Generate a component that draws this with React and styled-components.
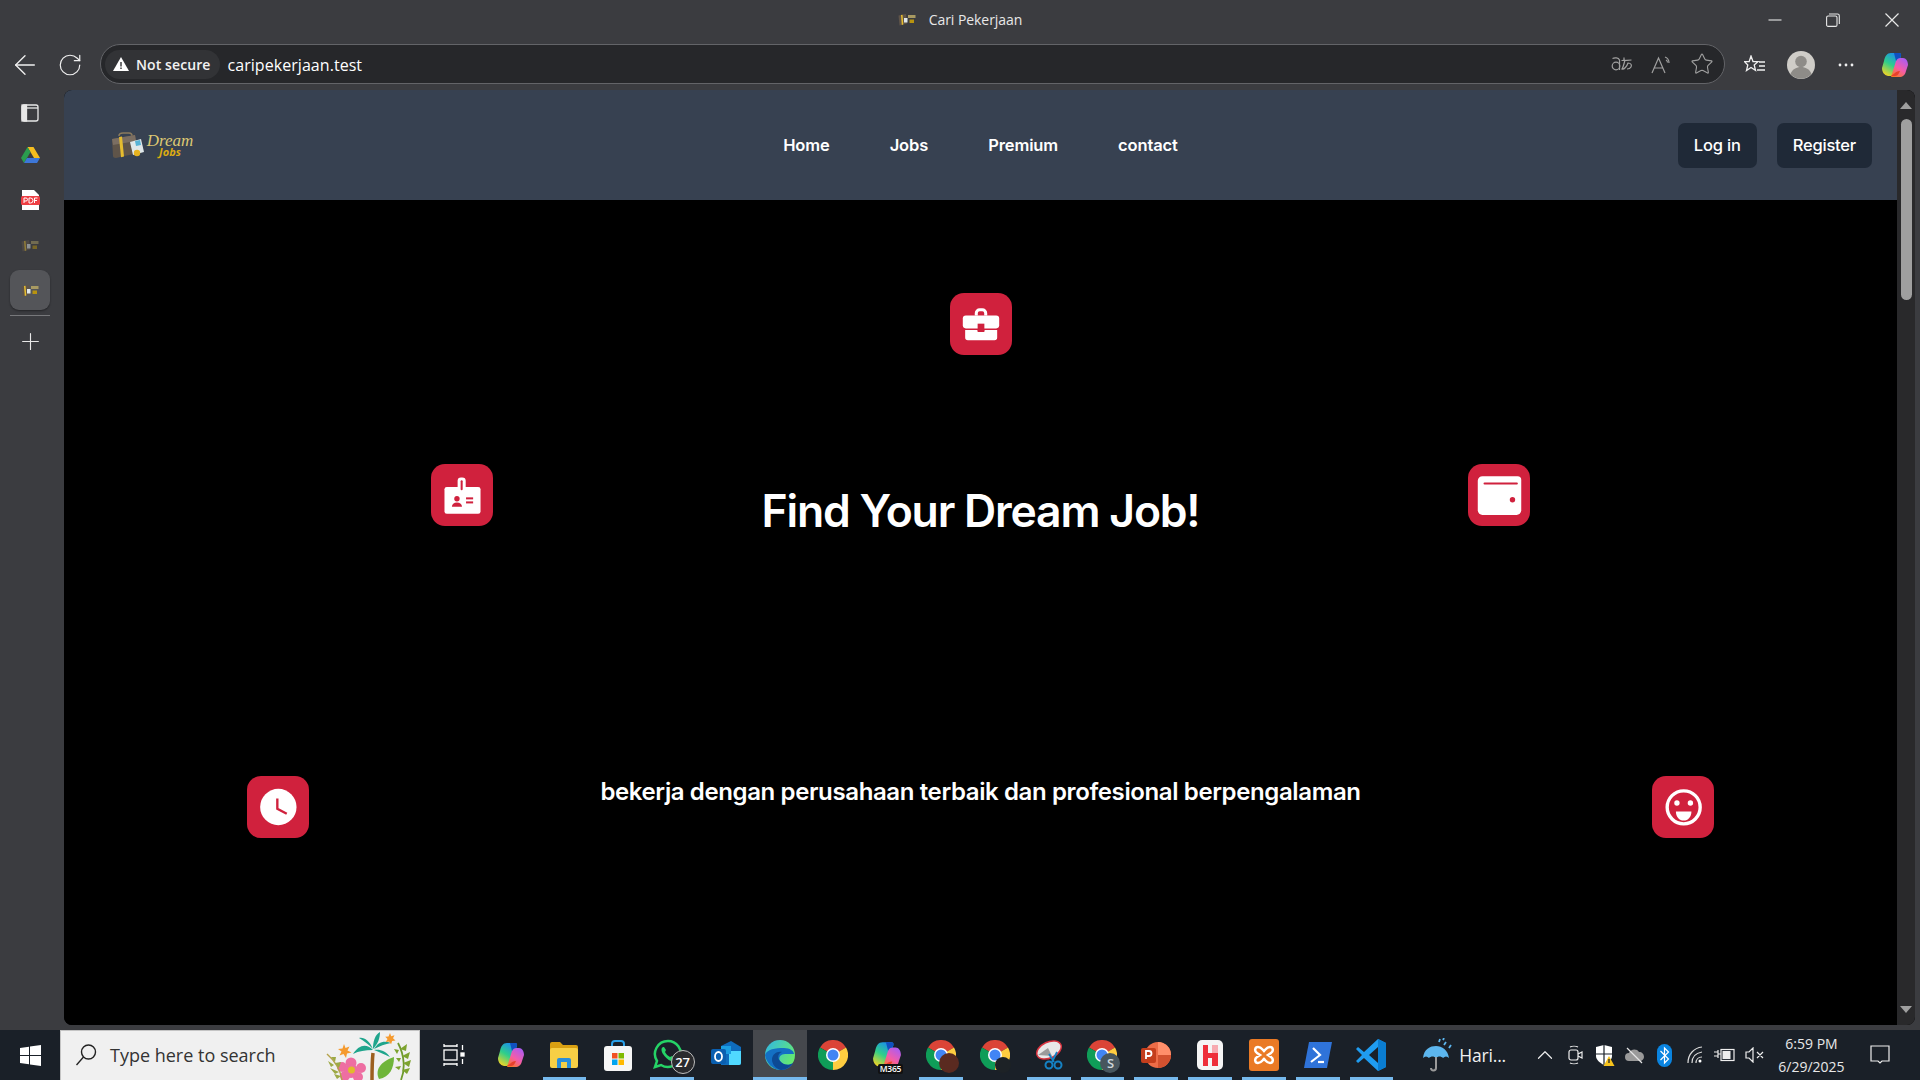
import React from "react";
import styled, { createGlobalStyle } from "styled-components";
import { ArrowLeft, RotateCw, Star, Plus, ChevronUp } from "lucide-react";

const Global = createGlobalStyle`
  html, body { margin: 0; padding: 0; background: #3b3c40; overflow: hidden; }
  * { box-sizing: border-box; }
  svg { flex: none; }
`;
const Screen = styled.div`
  width: 1920px; height: 1080px; display: flex; flex-direction: column; background: #3b3c40;
  font-family: "Open Sans", "Noto Sans", sans-serif; color: #fff;
`;
const TitleBar = styled.div`
  height: 44px; flex: none; display: grid; grid-template-columns: 1fr auto 1fr; align-items: start; padding-top: 10px;
`;
const TitleCenter = styled.div`
  grid-column: 2; display: flex; align-items: center; gap: 13px; font-size: 14px; line-height: 19px; letter-spacing: -0.05px; color: #e8e8e8;
`;
const WindowControls = styled.div`
  justify-self: end; display: flex; gap: 44px; padding-right: 20px; align-items: center; height: 19px;
`;
const Toolbar = styled.div`
  height: 46px; flex: none; display: flex; align-items: flex-start; padding-left: 9px; padding-right: 14px;
`;
const NavIcon = styled.span`
  display: flex; align-items: center; justify-content: center; width: ${p => p.$w || 22}px; height: 40px; margin-left: ${p => p.$ml || 0}px; flex: none; margin-top: 1px;
`;
const AddressBar = styled.div`
  width: 1625px; height: 40px; margin-left: 17px; flex: none; display: flex; align-items: center; background: #26272a; border: 1.5px solid #636468; border-radius: 20px; padding: 0 10px 0 4px;
`;
const SecurePill = styled.div`
  display: flex; align-items: center; gap: 7px; height: 29px; padding: 0 9px 0 8px; background: #323336; border-radius: 15px; font-size: 14px; font-weight: 600; letter-spacing: 0.1px; color: #f2f2f2;
`;
const UrlText = styled.span`
  margin-left: 8px; font-size: 16px; line-height: 22px; padding-top: 1px; letter-spacing: 0.05px; color: #fff;
`;
const AddressTools = styled.div`
  margin-left: auto; display: flex; align-items: center; gap: 18px;
`;
const Main = styled.div`
  flex: 1; min-height: 0; display: flex; padding: 0 5px 5px 0;
`;
const Sidebar = styled.aside`
  width: 64px; flex: none; display: flex; flex-direction: column; align-items: center; padding-top: 2px; padding-right: 4px;
`;
const SideIcon = styled.div`
  width: 40px; height: ${p => p.$h || 42}px; display: flex; align-items: center; justify-content: center; flex: none;
  ${p => p.$active && `background: #545559; border-radius: 9px; height: 40px; margin-top: 4px; box-shadow: 0 1px 2px #0006;`}
`;
const SideRule = styled.div`
  width: 40px; height: 1px; background: #77787b; margin: 5px 0 9px; flex: none;
`;
const BrowserPage = styled.div`
  flex: 1; min-width: 0; display: flex; border-radius: 8px; overflow: hidden; background: #000;
`;
const Page = styled.main`
  flex: 1; min-width: 0; display: flex; flex-direction: column;
`;
const ScrollTrack = styled.div`
  width: 18px; flex: none; background: #29292b; display: flex; flex-direction: column; align-items: center; padding-top: 12px;
`;
const ScrollThumb = styled.div`
  width: 11px; height: 181px; margin-top: 10px; background: #9f9f9f; border-radius: 6px;
`;
const ScrollArrow = styled.div`
  width: 0; height: 0; border-left: 6.5px solid transparent; border-right: 6.5px solid transparent;
  ${p => p.$down ? `border-top: 7px solid #9f9f9f; margin-top: auto; margin-bottom: 12px;` : `border-bottom: 7px solid #9f9f9f;`}
`;
const NavBar = styled.header`
  height: 110px; flex: none; background: #374151; display: grid; grid-template-columns: 1fr auto 1fr; align-items: center; padding: 0 25px;
`;
const Brand = styled.div`
  display: flex; align-items: center; gap: 2px; margin-left: 21px;
`;
const BrandText = styled.div`
  display: flex; flex-direction: column; align-items: center; width: 48px; margin-top: 0px;
`;
const BrandDream = styled.span`
  font: italic 400 17px/13px "Liberation Serif", serif; color: #dcc873;
`;
const BrandJobs = styled.span`
  font: italic 700 11px/10px "Open Sans", sans-serif; color: #dcab12;
`;
const NavLinks = styled.nav`
  display: flex; gap: 60px;
`;
const NavLink = styled.a`
  font: 600 16.5px/24px Inter, sans-serif; letter-spacing: -0.12px; color: #fff;
`;
const AuthButtons = styled.div`
  justify-self: end; display: flex; gap: 20px;
`;
const AuthButton = styled.button`
  height: 45px; padding: 0 16px; border: 0; border-radius: 7px; background: #1f2937; color: #fff; font: 500 16.5px/24px Inter, sans-serif; letter-spacing: -0.2px;
`;
const Hero = styled.section`
  flex: 1; display: flex; flex-direction: column; background: #000;
`;
const HeroTop = styled.div`
  display: flex; justify-content: center; padding-top: 93px;
`;
const HeroRow = styled.div`
  display: flex; justify-content: space-between; align-items: flex-start;
  margin-top: ${p => p.$mt}px; padding: 0 ${p => p.$inset}%;
`;
const Tile = styled.div`
  width: 62px; height: 62px; flex: none; border-radius: 14px; background: #d0213d; display: flex;
`;
const Heading = styled.h1`
  margin: 20px 0 0; font: 600 44.5px/54px Inter, sans-serif; letter-spacing: -1.2px; color: #fff; white-space: nowrap;
`;
const SubHeading = styled.p`
  margin: 0; font: 600 24px/29px Inter, sans-serif; letter-spacing: -0.38px; color: #fff; white-space: nowrap; margin-top: 1px;
`;
const Taskbar = styled.footer`
  height: 50px; flex: none; display: flex; align-items: stretch; background: #1a2028;
`;
const StartButton = styled.div`
  width: 60px; flex: none; display: flex; align-items: center; justify-content: center;
`;
const SearchBox = styled.div`
  width: 360px; flex: none; position: relative; display: flex; align-items: center; gap: 13px; padding: 0 0 2px 14px; background: #f0f0f0; border-top: 1px solid #c4c4c4; border-left: 1px solid #c4c4c4; border-right: 1px solid #c4c4c4; color: #333; font-size: 18px;
  overflow: hidden;
`;
const SearchArt = styled.span`
  position: absolute; right: 3px; bottom: 0; display: flex;
`;
const TaskList = styled.div`
  display: flex; margin-left: 5px; flex: none;
`;
const TaskSlot = styled.div`
  width: ${p => p.$w || 53.8}px; flex: none; position: relative; display: flex; align-items: center; justify-content: center;
  ${p => p.$active && `background: #45484d;`}
  &::after { content: ""; display: ${p => p.$run ? "block" : "none"}; position: absolute; bottom: 0; height: 3px; left: ${p => p.$active ? 0 : 5}px; right: ${p => p.$active ? 0 : 5}px; background: #76b9ed; }
`;
const Weather = styled.div`
  margin-left: 24px; display: flex; align-items: center; gap: 7px; font-size: 17.5px; letter-spacing: -0.2px; color: #f0f0f0; width: 98px; flex: none;
`;
const Tray = styled.div`
  display: flex; align-items: center; flex: none; margin-left: 10px;
`;
const TrayIcon = styled.span`
  width: 29.9px; display: flex; align-items: center; justify-content: center; flex: none;
`;
const Clock = styled.div`
  width: 84px; flex: none; display: flex; flex-direction: column; align-items: center; justify-content: center; font-size: 14px; line-height: 23px; color: #e8e8e8;
`;
const Notice = styled.span`
  width: 54px; display: flex; align-items: center; justify-content: center; flex: none;
`;

/* ---------- hero drawings ---------- */
const TileArt = ({ children }) => <svg width="62" height="62" viewBox="0 0 184 184">{children}</svg>;
const RED = "#d0213d";
const Briefcase = () => (
  <TileArt>
    <path d="M78 67V60a10 10 0 0 1 10-10h8a10 10 0 0 1 10 10v7" fill="none" stroke="#fff" strokeWidth="9" />
    <rect x="38" y="67" width="108" height="38" rx="9" fill="#fff" />
    <path d="M45 110h37v6h20v-6h38v22a8 8 0 0 1-8 8H53a8 8 0 0 1-8-8z" fill="#fff" />
    <rect x="82" y="91" width="20" height="22" fill={RED} />
  </TileArt>
);
const IdBadge = () => (
  <TileArt>
    <rect x="40" y="68" width="107" height="80" rx="7" fill="#fff" />
    <rect x="79" y="40" width="24" height="46" rx="10" fill="#fff" />
    <rect x="88" y="48" width="6" height="30" rx="3" fill={RED} />
    <circle cx="77" cy="103" r="8" fill={RED} />
    <path d="M62 127c0-8 6-13 15-13s15 5 15 13z" fill={RED} />
    <rect x="104" y="99" width="21" height="6" fill={RED} />
    <rect x="104" y="111" width="21" height="6" fill={RED} />
  </TileArt>
);
const Wallet = () => (
  <TileArt>
    <path d="M29 50a14 14 0 0 1 14-14h104a11 11 0 0 1 11 11v90a14 14 0 0 1-14 14H43a14 14 0 0 1-14-14z" fill="#fff" />
    <rect x="46" y="55" width="102" height="6" rx="3" fill={RED} />
    <circle cx="132" cy="106" r="8" fill={RED} />
  </TileArt>
);
const ClockArt = () => (
  <TileArt>
    <circle cx="93" cy="92" r="54" fill="#fff" />
    <path d="M90 67v30l28 15" fill="none" stroke={RED} strokeWidth="7" />
  </TileArt>
);
const Smile = () => (
  <TileArt>
    <circle cx="94" cy="93" r="49" fill="none" stroke="#fff" strokeWidth="10" />
    <circle cx="74" cy="80" r="8" fill="#fff" />
    <circle cx="114" cy="80" r="8" fill="#fff" />
    <path d="M71 105h46c0 16-10 27-23 27s-23-11-23-27z" fill="#fff" />
  </TileArt>
);

/* ---------- small drawings ---------- */
const Favicon = ({ dim }) => (
  <svg width="18" height="13" viewBox="0 0 18 13" opacity={dim ? 0.5 : 1}>
    <path d="M0.500 2.500l7.500-1.500 1 9.500-7.500 2z" fill="#5f5449" />
    <path d="M3 2l1.500-.3 .8 9.800-1.500.4z" fill="#e6bd2f" />
    <rect x="6" y="5" width="3.500" height="4.500" fill="#dfe7ea" />
    <rect x="10" y="2" width="7.500" height="3" fill="#a89a62" />
    <rect x="11.500" y="6.500" width="4.500" height="3.500" fill="#b8930f" />
  </svg>
);
const LogoCase = () => (
  <svg width="34" height="28" viewBox="0 0 34 28">
    <path d="M9 5c0-2 2-3 4-3h6c2 0 3 1 3 3" fill="none" stroke="#8a7a5e" strokeWidth="1.5" />
    <path d="M2 8l23-4 3 18-22 5c-2 0-3-1-3-2z" fill="#5f5449" />
    <path d="M2 8l23-4 1 6-23 4z" fill="#7b6e62" />
    <path d="M9 6l3-.6 2 20-3 .8z" fill="#e6bd2f" />
    <path d="M20 11l11-3 3 13-11 3z" fill="#dfe7ea" />
    <path d="M25 10l5-1 1 5-5 1z" fill="#57b3d6" />
    <circle cx="27" cy="22" r="3.2" fill="#e6b320" />
  </svg>
);
const Windows = () => (
  <svg width="21" height="21" viewBox="0 0 21 21" fill="#fff">
    <path d="M0 3l9-1.300V10H0zM10 1.500L21 0v10H10zM0 11h9v8.300L0 18zM10 11h11v10l-11-1.500z" />
  </svg>
);
const Magnifier = () => (
  <svg width="22" height="24" viewBox="0 0 22 24" fill="none" stroke="#222" strokeWidth="1.4">
    <circle cx="13.500" cy="9" r="7" />
    <path d="M8.500 14L1.500 22" />
  </svg>
);
const Tropical = () => (
  <svg width="90" height="50" viewBox="0 0 90 50">
    <path d="M46 50c0-10 0-18 1-27" stroke="#9c5f1f" strokeWidth="3.500" fill="none" />
    <path d="M47 20C40 13 33 15 27 24c6-3 12-4 20-4zM47 19C43 10 38 7 33 8c5 3 9 6 14 11zM47 19c0-8 2-14 7-17 0 6-2 12-7 17zM48 19c4-7 10-9 17-6-6 1-11 3-17 6zM48 20c6-1 12 1 16 7-6-3-11-5-16-7z" fill="#1fa58c" />
    <g fill="#ee6ea2">
      <circle cx="25" cy="33" r="5.500" /><circle cx="35" cy="38" r="5" /><circle cx="32" cy="47" r="5" /><circle cx="19" cy="46" r="5" /><circle cx="16" cy="37" r="5" />
      <circle cx="25" cy="41" r="7" />
    </g>
    <circle cx="25.500" cy="40" r="3.500" fill="#e2b92c" />
    <g fill="#f59a2e">
      <path d="M18 14l1.500 4 4-1.500-2 4 4 2-4.500 1-1 4.500-2.500-4-4 1.500 2-4-3.500-2.500 4.500-.5z" />
      <path d="M64 3l1.200 3.300 3.300-1-1.500 3 2.500 2.200-3.400.4-1 3.300-2-2.800-3.300.6 1.700-3-2.300-2.300 3.300-.3z" />
    </g>
    <path d="M53 49c-4-8 0-17 15-22 0 11-4 20-15 22z" fill="#6fb53a" />
    <path d="M75 50c4-10 4-24-3-37" stroke="#6e9a2c" strokeWidth="1.800" fill="none" />
    <path d="M74 19l7-5-1 7zM76 26l8-4-2 7zM77 33l8-3-2 7zM76 40l8-2-3 6zM73 20l-5-1 3 5zM75 28l-5 0 3 4zM75 36l-6 1 4 3z" fill="#7da32f" />
    <path d="M1 24c7 6 13 14 15 26" stroke="#b5a24a" strokeWidth="1.500" fill="none" />
    <path d="M5 27l5 0-1 5zM9 33l6-1-2 6zM2 31l6 4-3 2zM4 38l9 4-4 2zM8 44l7 2-4 3z" fill="#9ca945" />
  </svg>
);
const TaskViewIcon = () => (
  <svg width="22" height="24" viewBox="0 0 22 24" fill="none" stroke="#fff" strokeWidth="1.3">
    <rect x="1" y="7" width="13" height="10" />
    <path d="M1 3h13M1 21h13M14 1v3M1 1v3M1 20v3M14 20v3" />
    <rect x="18" y="10" width="3" height="3" fill="#fff" />
    <path d="M19.500 2v5M19.500 16v5" />
  </svg>
);
const CopilotIcon = ({ id, size = 28 }) => (
  <svg width={size} height={size} viewBox="0 0 28 28">
    <defs>
      <linearGradient id={id + "a"} x1="0.700" y1="0" x2="0.200" y2="1">
        <stop offset="0" stopColor="#1a8cf0" /><stop offset=".5" stopColor="#2fcf8a" /><stop offset="1" stopColor="#fbd420" />
      </linearGradient>
      <linearGradient id={id + "b"} x1="0.800" y1="0" x2="0.200" y2="1">
        <stop offset="0" stopColor="#a85cf5" /><stop offset=".55" stopColor="#f45ca8" /><stop offset="1" stopColor="#f97a24" />
      </linearGradient>
    </defs>
    <path d="M10 2h8c2 0 2 1 2 3l-6 17c-1 2-2 3-4 3H7c-4-1-6-4-6-8l2-7c1-5 3-8 7-8z" fill={`url(#${id}a)`} />
    <path d="M18 26h-7c-1 0-1-.5-.5-1.500L15 10c1-2 2-3 4-3h3c3 0 5 3 5 7l-2 6c-1 4-3 6-7 6z" fill={`url(#${id}b)`} />
    <path d="M13 2h5c2 0 2.500 1 2 3l-1 2c-2 0-3 1-4 3z" fill="#1050c0" />
    <path d="M10 25h4c2 0 3-1 4-3l1-2c-3 0-4 1-5 2z" fill="#e8402c" />
  </svg>
);
const Explorer = () => (
  <svg width="28" height="26" viewBox="0 0 28 26">
    <path d="M0 2a2 2 0 0 1 2-2h8l3 3h13a2 2 0 0 1 2 2v4H0z" fill="#d9a012" />
    <rect y="6" width="28" height="20" rx="2" fill="#f7cf45" />
    <path d="M7 26V18a2 2 0 0 1 2-2h10a2 2 0 0 1 2 2v8h-4v-6h-6v6z" fill="#2b8ed8" />
  </svg>
);
const StoreIcon = () => (
  <svg width="28" height="31" viewBox="0 0 28 31">
    <path d="M8 8V4a3 3 0 0 1 3-3h6a3 3 0 0 1 3 3v4" fill="none" stroke="#2aa0e8" strokeWidth="2" />
    <rect y="6" width="28" height="25" rx="3" fill="#f6f6f6" />
    <rect x="8" y="13" width="5.500" height="5.500" fill="#f25022" />
    <rect x="14.500" y="13" width="5.500" height="5.500" fill="#7fba00" />
    <rect x="8" y="19.500" width="5.500" height="5.500" fill="#00a4ef" />
    <rect x="14.500" y="19.500" width="5.500" height="5.500" fill="#ffb900" />
  </svg>
);
const BadgeWrap = styled.span`position: relative; display: flex; margin-top: -2px; margin-left: -9px;`;
const CountBadge = styled.span`
  position: absolute; right: -12px; bottom: -5px; width: 24px; height: 24px; border-radius: 50%; background: #2a2b2e; border: 1px solid #bdbdbd; display: flex; align-items: center; justify-content: center; font-size: 13px; font-weight: 600; color: #fff;
`;
const WhatsApp = () => (
  <BadgeWrap>
    <svg width="30" height="30" viewBox="0 0 30 30">
      <path d="M15 2a13 13 0 0 0-11 20l-2 6 6-2A13 13 0 1 0 15 2z" fill="none" stroke="#25d366" strokeWidth="2.5" />
      <path d="M10 8c-2 1-2 4 0 7s5 6 8 7c3 0 4-2 4-3l-3-2-2 1c-2-1-4-3-5-5l1-2-2-3z" fill="#25d366" />
    </svg>
    <CountBadge>27</CountBadge>
  </BadgeWrap>
);
const Outlook = () => (
  <svg width="30" height="28" viewBox="0 0 30 28">
    <path d="M10 5l10-5 10 6v16a2 2 0 0 1-2 2H10z" fill="#0f6cbd" />
    <path d="M18 10h12v12a2 2 0 0 1-2 2H18z" fill="#50d9ff" />
    <path d="M10 5h10v8H10z" fill="#1b9de2" />
    <rect y="8" width="15" height="15" rx="2" fill="#0a5fb0" />
    <ellipse cx="7.500" cy="15.500" rx="3.500" ry="4.500" fill="none" stroke="#fff" strokeWidth="1.800" />
  </svg>
);
const Edge = () => (
  <svg width="30" height="30" viewBox="0 0 30 30">
    <defs>
      <linearGradient id="edgeA" x1="0" y1="0" x2="1" y2="0.600"><stop offset="0" stopColor="#2fb5e8" /><stop offset="1" stopColor="#66eb6e" /></linearGradient>
    </defs>
    <circle cx="15" cy="15" r="15" fill="url(#edgeA)" />
    <path d="M0 15C1 22 7 30 16 30c6 0 10-3 12-7-4 3-11 2-13-2-2-4 1-7 5-7h9c0-3-4-6-10-6C10 8 2 9 0 15z" fill="#1470c4" />
    <path d="M15 21c-3-3-2-8 2-9-5-1-10 2-10 8 0 4 4 9 9 10 5 0 9-3 12-7-4 3-10 2-13-2z" fill="#0d4a94" />
  </svg>
);
const Chrome = () => (
  <svg width="30" height="30" viewBox="0 0 30 30">
    <path d="M15 15L2 7.500A15 15 0 0 1 28 7.500z" fill="#db4437" />
    <path d="M15 15L2 7.500A15 15 0 0 0 15 30z" fill="#0f9d58" />
    <path d="M15 15L28 7.500A15 15 0 0 1 15 30z" fill="#ffcd40" />
    <circle cx="15" cy="15" r="7" fill="#fff" />
    <circle cx="15" cy="15" r="5.500" fill="#4285f4" />
  </svg>
);
const ChromeWrap = styled.span`position: relative; display: flex;`;
const ProfileDot = styled.span`
  position: absolute; right: ${p => p.$r ?? -3}px; bottom: -3px; width: ${p => p.$s || 20}px; height: ${p => p.$s || 20}px; border-radius: 50%; background: ${p => p.$bg}; display: flex; align-items: center; justify-content: center; font-size: 13px; font-weight: 600; color: #cfd8dc;
`;
const M365Tag = styled.span`
  position: absolute; right: -1px; bottom: -4px; background: #111; color: #fff; font-size: 8.5px; line-height: 10px; padding: 0 2px; border-radius: 2px; font-weight: 600; letter-spacing: -0.2px;
`;
const M365 = () => (
  <ChromeWrap>
    <CopilotIcon id="m365" size={30} />
    <M365Tag>M365</M365Tag>
  </ChromeWrap>
);
const Snip = () => (
  <svg width="28" height="30" viewBox="0 0 28 30">
    <ellipse cx="14" cy="10" rx="13" ry="8" fill="#e8e8e8" stroke="#d9333f" strokeWidth="1.500" transform="rotate(-25 14 10)" />
    <path d="M3 15l10-7 4 8z" fill="#9b9b9b" />
    <path d="M14 14l5 8M22 12l-5 10" stroke="#1582c4" strokeWidth="1.800" fill="none" />
    <circle cx="14" cy="25" r="3.500" fill="none" stroke="#1582c4" strokeWidth="2" />
    <circle cx="23" cy="25" r="3.500" fill="none" stroke="#1582c4" strokeWidth="2" />
  </svg>
);
const PowerPoint = () => (
  <svg width="30" height="30" viewBox="0 0 30 30">
    <circle cx="17" cy="15" r="13" fill="#ed6c47" />
    <path d="M17 2a13 13 0 0 1 13 13H17z" fill="#ff8f6b" />
    <path d="M17 15h13a13 13 0 0 1-13 13z" fill="#d35230" />
    <rect y="8" width="15" height="15" rx="2" fill="#c43e1c" />
    <path d="M5 19v-8h3a2.500 2.500 0 0 1 0 5H5" fill="none" stroke="#fff" strokeWidth="1.800" />
  </svg>
);
const HApp = () => (
  <svg width="26" height="30" viewBox="0 0 26 30">
    <rect width="26" height="30" rx="5" fill="#f5f5f5" />
    <path d="M6 5h5v8h4V5h6v21h-6v-8h-4v8H6z" fill="#ee2f3a" />
    <path d="M15 5h6v8h-6z" fill="#f7aab0" />
  </svg>
);
const Xampp = () => (
  <svg width="30" height="32" viewBox="0 0 30 32">
    <rect width="30" height="32" rx="3" fill="#ea7a25" />
    <path d="M9 8c3 0 4 2 6 4 2-2 3-4 6-4s4 4 1 6l-3 2 3 2c3 2 2 6-1 6s-4-2-6-4c-2 2-3 4-6 4s-4-4-1-6l3-2-3-2c-3-2-2-6 1-6z" fill="none" stroke="#fff" strokeWidth="2.500" />
  </svg>
);
const Terminal = () => (
  <svg width="30" height="26" viewBox="0 0 30 26">
    <path d="M6 0h23l-5 26H1z" fill="#2f73d9" />
    <path d="M10 6l7 7-9 7" fill="none" stroke="#fff" strokeWidth="2.200" />
    <path d="M15 20h6" stroke="#fff" strokeWidth="2.200" />
  </svg>
);
const VSCode = () => (
  <svg width="30" height="34" viewBox="0 0 30 34">
    <path d="M22 1l8 4v24l-8 4L8 20l-6 5-2-2 6-6-6-6 2-2 6 5z" fill="#1f9cf0" />
    <path d="M22 1l8 4v24l-8 4z" fill="#0a7dd1" />
    <path d="M22 9v16l-9-8z" fill="#1a2028" />
  </svg>
);
const Umbrella = () => (
  <svg width="30" height="34" viewBox="0 0 30 34">
    <path d="M1 20C2 11 8 8 14 8s12 4 13 12c-2-2-4-2-6 0-2-2-5-2-7 0-2-2-5-2-7 0-2-2-4-2-6 0z" fill="#5cb6ee" />
    <path d="M14 19v11a2.500 2.500 0 0 1-5 0" fill="none" stroke="#9a9a9a" strokeWidth="2" />
    <path d="M17 4l1-3M22 7l2-3M27 10l2-3M21 2l1-2" stroke="#5cb6ee" strokeWidth="1.800" />
  </svg>
);
const Tools = {
  meet: <svg width="15" height="22" viewBox="0 0 15 22" fill="none" stroke="#eee" strokeWidth="1.200"><rect x="1" y="6" width="9" height="10" rx="2" /><path d="M10 10l4-2v6l-4-2M2 3c2-1 6-1 8 0M2 19c2 1 6 1 8 0" /></svg>,
  shield: <svg width="20" height="23" viewBox="0 0 20 23"><path d="M9 1l8 2v9c0 4-4 7-8 9-4-2-8-5-8-9V3z" fill="#fff" /><path d="M9 1v20M1 10h16" stroke="#1a2028" strokeWidth="1.200" /><path d="M14 12l5.500 10h-11z" fill="#f6c21c" /><path d="M14 15v4" stroke="#222" strokeWidth="1.300" /></svg>,
  cloud: <svg width="21" height="18" viewBox="0 0 21 18"><path d="M5 15a4 4 0 0 1 0-8c1-4 8-5 10-1 3 0 5 2 5 5 0 2-2 4-4 4z" fill="#9a9a9a" /><path d="M3 2l15 15" stroke="#e6e6e6" strokeWidth="1.300" /></svg>,
  bluetooth: <svg width="15" height="23" viewBox="0 0 15 23"><rect width="15" height="23" rx="7.500" fill="#0a84e0" /><path d="M3.500 7l8 8-4 4V4l4 4-8 8" fill="none" stroke="#fff" strokeWidth="1.200" /></svg>,
  wifi: <svg width="16" height="18" viewBox="0 0 16 18" fill="none" stroke="#ddd" strokeWidth="1.200"><path d="M1 17C1 8 7 2 15 1M5 17c0-6 4-10 10-11M9 17c0-3 2-6 6-6" /><circle cx="13" cy="15" r="1.500" fill="#fff" stroke="none" /></svg>,
  battery: <svg width="21" height="14" viewBox="0 0 21 14"><path d="M0 4h4M0 8h4M4 2v8M4 6h3" stroke="#eee" strokeWidth="1.200" fill="none" /><rect x="7" y="1.500" width="13" height="11" fill="none" stroke="#eee" strokeWidth="1.200" /><rect x="8.500" y="3" width="8" height="8" fill="#eee" /></svg>,
  sound: <svg width="20" height="16" viewBox="0 0 20 16" fill="none" stroke="#eee" strokeWidth="1.200"><path d="M1 5h3l4-4v14l-4-4H1zM12 5l6 6M18 5l-6 6" /></svg>,
};

const tasks = [
  { icon: <CopilotIcon id="tb" /> },
  { icon: <Explorer />, run: true },
  { icon: <StoreIcon /> },
  { icon: <WhatsApp />, run: true },
  { icon: <Outlook /> },
  { icon: <Edge />, run: true, active: true },
  { icon: <Chrome /> },
  { icon: <M365 /> },
  { icon: <ChromeWrap><Chrome /><ProfileDot $bg="#5a2a20" /></ChromeWrap>, run: true },
  { icon: <ChromeWrap><Chrome /><ProfileDot $bg="#1d2226" $s={16} $r={-1} /></ChromeWrap> },
  { icon: <Snip />, run: true },
  { icon: <ChromeWrap><Chrome /><ProfileDot $bg="#48565e">S</ProfileDot></ChromeWrap>, run: true },
  { icon: <PowerPoint />, run: true },
  { icon: <HApp />, run: true },
  { icon: <Xampp />, run: true },
  { icon: <Terminal />, run: true },
  { icon: <VSCode />, run: true },
];

export default function App() {
  return (
    <Screen>
      <Global />
      <TitleBar>
        <TitleCenter><Favicon />Cari Pekerjaan</TitleCenter>
        <WindowControls>
          <svg width="14" height="14" viewBox="0 0 14 14" stroke="#e8e8e8" strokeWidth="1.100"><path d="M0.500 7h13" /></svg>
          <svg width="14" height="14" viewBox="0 0 14 14" fill="none" stroke="#e8e8e8" strokeWidth="1.100"><rect x="0.600" y="3" width="10.400" height="10.400" rx="1.500" /><path d="M3 1h8.500A1.800 1.800 0 0 1 13.300 2.800V11" /></svg>
          <svg width="16" height="16" viewBox="0 0 16 16" stroke="#e8e8e8" strokeWidth="1.200"><path d="M1.500 1.500l13 13M14.500 1.500l-13 13" /></svg>
        </WindowControls>
      </TitleBar>
      <Toolbar>
        <NavIcon $w={32}><ArrowLeft size={32} color="#f0f0f0" strokeWidth={1} /></NavIcon>
        <NavIcon $w={26} $ml={16}><RotateCw size={26} color="#f0f0f0" strokeWidth={1.100} /></NavIcon>
        <AddressBar>
          <SecurePill>
            <svg width="16" height="14" viewBox="0 0 16 14"><path d="M8 0l8 14H0z" fill="#fff" /><path d="M8 5v4.500M8 10.500v1.500" stroke="#323336" strokeWidth="1.400" /></svg>
            Not secure
          </SecurePill>
          <UrlText>caripekerjaan.test</UrlText>
          <AddressTools>
            <svg width="22" height="16" viewBox="0 0 22 16" fill="none" stroke="#a0a0a0" strokeWidth="1.200"><circle cx="5" cy="10" r="3.800" /><path d="M1.500 2.500c2-1 6-1 7 1.500v10M13 1.500v3M10.500 4.500c3 0 6 0 10-.5M14 4c-1 4-2 8-3 9 2 1 5-3 6-6 3 0 4 2 3 4-1 2-3 2-4 2" /></svg>
            <svg width="21" height="19" viewBox="0 0 21 19" fill="none" stroke="#a0a0a0" strokeWidth="1.200"><path d="M1 18L7.500 3 14 18M3.500 13h8M14 2c3 1 4 3 4 6M15 5c1 .5 1.500 1 1.500 2.500" /></svg>
            <Star size={24} color="#a0a0a0" strokeWidth={1.100} />
          </AddressTools>
        </AddressBar>
        <NavIcon $w={22} $ml={19}>
          <svg width="22" height="20" viewBox="0 0 22 20" fill="none" stroke="#f0f0f0" strokeWidth="1.300"><path d="M7 1l2 5.500 5 .2-3.800 3.300 1.300 5.300L7 12.500 2.500 15.500 3.800 10 0.500 6.700l4.700-.2zM15 7h6M15 11h6M13 15h8" /></svg>
        </NavIcon>
        <NavIcon $w={30} $ml={20}>
          <svg width="28" height="28" viewBox="0 0 28 28"><circle cx="14" cy="14" r="14" fill="#cfcdc8" /><circle cx="14" cy="10.500" r="5.800" fill="#8e8c88" /><path d="M3.500 23c2-5 6-7 10.500-7s8.500 2 10.500 7a14 14 0 0 1-21 0z" fill="#8e8c88" /></svg>
        </NavIcon>
        <NavIcon $w={20} $ml={20}>
          <svg width="16" height="4" viewBox="0 0 16 4" fill="#f0f0f0"><circle cx="2" cy="2" r="1.400" /><circle cx="8" cy="2" r="1.400" /><circle cx="14" cy="2" r="1.400" /></svg>
        </NavIcon>
        <NavIcon $w={28} $ml={25}><CopilotIcon id="tool" /></NavIcon>
      </Toolbar>
      <Main>
        <Sidebar>
          <SideIcon>
            <svg width="18" height="18" viewBox="0 0 18 18" fill="none" stroke="#e8e8e8" strokeWidth="1.300"><rect x="1" y="1" width="16" height="16" rx="2" /><rect x="1" y="1" width="4.500" height="16" fill="#e8e8e8" /><path d="M1 4h16" /></svg>
          </SideIcon>
          <SideIcon>
            <svg width="19" height="17" viewBox="0 0 19 17"><path d="M6.500 0h6L19 11h-6z" fill="#f5bd1f" /><path d="M6.500 0L0 11l3 5 6.500-11z" fill="#2a9d4e" /><path d="M3 16h13l3-5H6z" fill="#3d77d8" /></svg>
          </SideIcon>
          <SideIcon $h={48}>
            <svg width="19" height="20" viewBox="0 0 19 20"><path d="M1 0h12l5 5v15H1z" fill="#fff" /><rect y="6" width="19" height="9" rx="1.500" fill="#ee3f44" /><path d="M3 13V8h2a1.300 1.300 0 0 1 0 3H3M8 8v5h1.500a2.500 2.500 0 0 0 0-5zM13.500 13V8h3M13.500 10.500h2.500" fill="none" stroke="#fff" strokeWidth="1" /></svg>
          </SideIcon>
          <SideIcon><Favicon dim /></SideIcon>
          <SideIcon $active><Favicon /></SideIcon>
          <SideRule />
          <SideIcon $h={32}><Plus size={27} color="#e8e8e8" strokeWidth={1} /></SideIcon>
        </Sidebar>
        <BrowserPage>
          <Page>
            <NavBar>
              <Brand>
                <LogoCase />
                <BrandText>
                  <BrandDream>Dream</BrandDream>
                  <BrandJobs>Jobs</BrandJobs>
                </BrandText>
              </Brand>
              <NavLinks>
                <NavLink>Home</NavLink>
                <NavLink>Jobs</NavLink>
                <NavLink>Premium</NavLink>
                <NavLink>contact</NavLink>
              </NavLinks>
              <AuthButtons>
                <AuthButton>Log in</AuthButton>
                <AuthButton>Register</AuthButton>
              </AuthButtons>
            </NavBar>
            <Hero>
              <HeroTop><Tile><Briefcase /></Tile></HeroTop>
              <HeroRow $mt={109} $inset={20}>
                <Tile><IdBadge /></Tile>
                <Heading>Find Your Dream Job!</Heading>
                <Tile><Wallet /></Tile>
              </HeroRow>
              <HeroRow $mt={238} $inset={10}>
                <Tile><ClockArt /></Tile>
                <SubHeading>bekerja dengan perusahaan terbaik dan profesional berpengalaman</SubHeading>
                <Tile><Smile /></Tile>
              </HeroRow>
            </Hero>
          </Page>
          <ScrollTrack>
            <ScrollArrow />
            <ScrollThumb />
            <ScrollArrow $down />
          </ScrollTrack>
        </BrowserPage>
      </Main>
      <Taskbar>
        <StartButton><Windows /></StartButton>
        <SearchBox>
          <Magnifier />
          Type here to search
          <SearchArt><Tropical /></SearchArt>
        </SearchBox>
        <TaskList>
          <TaskSlot $w={58.800}><TaskViewIcon /></TaskSlot>
          {tasks.map((t, i) => (
            <TaskSlot key={i} $run={t.run} $active={t.active}>{t.icon}</TaskSlot>
          ))}
        </TaskList>
        <Weather><Umbrella />Hari...</Weather>
        <Tray>
          <TrayIcon><ChevronUp size={26} color="#eee" strokeWidth={1.100} /></TrayIcon>
          <TrayIcon>{Tools.meet}</TrayIcon>
          <TrayIcon>{Tools.shield}</TrayIcon>
          <TrayIcon>{Tools.cloud}</TrayIcon>
          <TrayIcon>{Tools.bluetooth}</TrayIcon>
          <TrayIcon>{Tools.wifi}</TrayIcon>
          <TrayIcon>{Tools.battery}</TrayIcon>
          <TrayIcon>{Tools.sound}</TrayIcon>
        </Tray>
        <Clock><span>6:59 PM</span><span>6/29/2025</span></Clock>
        <Notice>
          <svg width="20" height="20" viewBox="0 0 20 20" fill="none" stroke="#eee" strokeWidth="1.200"><path d="M1 1h18v15h-7l-2 2-2-2H1z" /></svg>
        </Notice>
      </Taskbar>
    </Screen>
  );
}
